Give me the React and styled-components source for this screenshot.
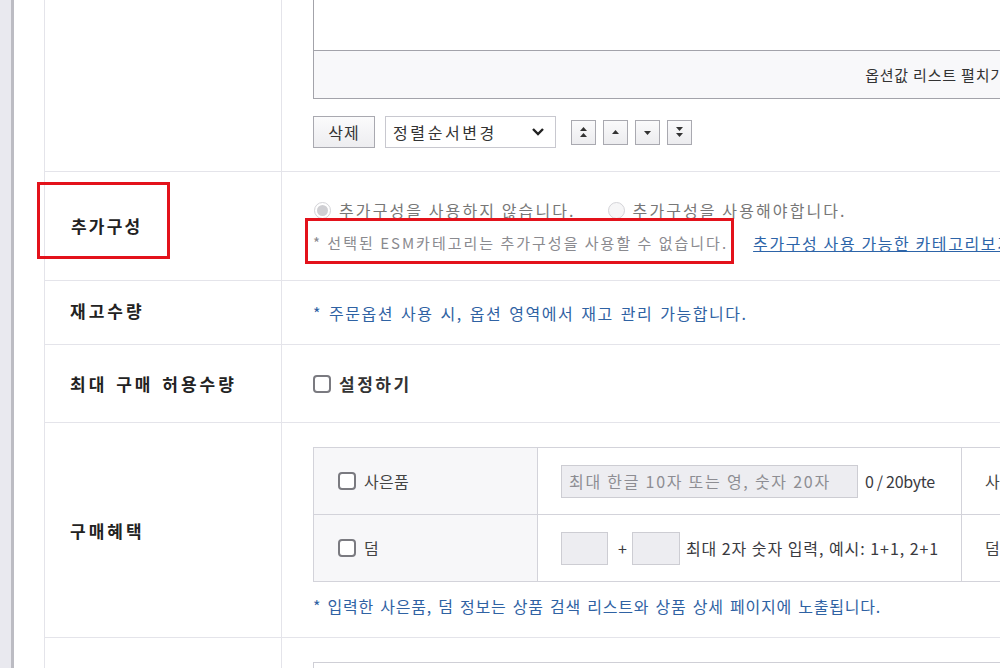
import React from 'react';
import styled, { createGlobalStyle } from 'styled-components';

const Global = createGlobalStyle`
  html, body { margin: 0; padding: 0; background: #fff; overflow: hidden; }
  body {
    font-family: "Noto Sans CJK KR", "Noto Sans", sans-serif;
    color: #333;
    font-size: 16px;
  }
  * { box-sizing: border-box; }
`;

const Shell = styled.div`
  display: flex;
  width: 1700px;
  height: 668px;
  overflow: hidden;
`;

const SideStrip = styled.div`
  width: 14px;
  flex-shrink: 0;
  background: #e9e9ef;
  border-right: 3px solid #bcbcc3;
`;

const Main = styled.div`
  flex: 1;
  padding-left: 30px;
`;

const Table = styled.div`
  border-left: 1px solid #e4e4ea;
  margin-top: -20px;
`;

const Row = styled.div`
  display: grid;
  grid-template-columns: 236px 1fr;
  border-bottom: 1px solid #e4e4ea;
`;

const LabelCell = styled.div`
  display: flex;
  align-items: center;
  padding: 0 0 ${(p) => p.$lift || '0'} 25px;
  font-weight: 700;
  color: #222;
  font-size: 17px;
  letter-spacing: 3px;
  word-spacing: 2px;
`;

const Mark = styled.div`
  display: flex;
  align-items: center;
  width: 133px;
  height: 77px;
  margin: 0 0 12px -33px;
  padding: 10px 0 0 31px;
  border: 3px solid #e3121b;
  letter-spacing: 2.2px;
`;

const ContentCell = styled.div`
  border-left: 1px solid #e4e4ea;
  padding: ${(p) => p.$pad || '0 0 0 31px'};
  display: flex;
  flex-direction: column;
  justify-content: ${(p) => (p.$center ? 'center' : 'flex-start')};
  min-height: ${(p) => p.$h || 'auto'};
`;

/* option list box */
const OptionBox = styled.div`
  width: 1264px;
  border: 1px solid #a3a3aa;
`;
const OptionList = styled.div`
  height: 51px;
  background: #fff;
`;
const OptionFooter = styled.div`
  height: 48px;
  border-top: 1px solid #a3a3aa;
  background: #f8f8fa;
  display: flex;
  align-items: center;
  justify-content: center;
  font-size: 15px;
  color: #333;
  letter-spacing: 0.8px;
`;

const Controls = styled.div`
  display: flex;
  align-items: center;
  margin-top: 17px;
  height: 32px;
`;

const Button = styled.div`
  height: 32px;
  width: 62px;
  display: flex;
  align-items: center;
  justify-content: center;
  border: 1px solid #a9a9b0;
  background: linear-gradient(#fbfbfc, #ededf0);
  font-size: 16px;
  color: #333;
  letter-spacing: 1px;
`;

const Select = styled.div`
  margin-left: 10px;
  width: 171px;
  height: 32px;
  border: 1px solid #c8c8cf;
  background: #fff;
  display: flex;
  align-items: center;
  justify-content: space-between;
  padding: 0 10px 0 7px;
  font-size: 16px;
  letter-spacing: 2.6px;
  color: #333;
`;

const ArrowGroup = styled.div`
  display: flex;
  gap: 7px;
  margin-left: 15px;
`;

const ArrowBtn = styled.div`
  width: 25px;
  height: 25px;
  border: 1px solid #a9a9b0;
  background: linear-gradient(#fafafb, #ececef);
  display: flex;
  align-items: center;
  justify-content: center;
`;

const RadioRow = styled.div`
  display: flex;
  align-items: center;
  height: 24px;
`;

const RadioItem = styled.label`
  display: flex;
  align-items: center;
  margin-right: ${(p) => p.$mr || '0'};
  color: #777;
  font-size: 16px;
  letter-spacing: 2.1px;
`;

const RadioDot = styled.span`
  width: 17px;
  height: 17px;
  border-radius: 50%;
  border: 1px solid #d4d4d8;
  background: ${(p) => (p.$checked ? '#fff' : '#f6f6f7')};
  margin: 0 8px 0 1px;
  display: flex;
  align-items: center;
  justify-content: center;
  &::after {
    content: '';
    display: ${(p) => (p.$checked ? 'block' : 'none')};
    width: 11px;
    height: 11px;
    border-radius: 50%;
    background: #cfcfd3;
  }
`;

const NoteLine = styled.div`
  display: flex;
  align-items: center;
  margin-top: 9px;
  height: 24px;
`;

const MarkedNote = styled.span`
  display: inline-block;
  border: 3px solid #e3121b;
  padding: 10px 3px 6px 5px;
  margin: -13px 0 -9px -8px;
  line-height: 24px;
  font-size: 15px;
  color: #8a8a8f;
  letter-spacing: 2px;
  white-space: nowrap;
`;

const Link = styled.a`
  margin-left: 19px;
  color: #2d64a8;
  text-decoration: underline;
  font-size: 16px;
  letter-spacing: 1.6px;
  white-space: nowrap;
`;

const BlueNote = styled.div`
  color: #2f62a3;
  font-size: 16px;
  letter-spacing: ${(p) => p.$ls || '1.5px'};
  word-spacing: 2px;
  line-height: 24px;
  margin-top: ${(p) => p.$mt || '0'};
  white-space: nowrap;
`;

const CheckLabel = styled.label`
  display: flex;
  align-items: center;
  font-size: ${(p) => (p.$bold ? '17px' : '16px')};
  color: ${(p) => (p.$bold ? '#333' : '#444')};
  font-weight: ${(p) => (p.$bold ? 700 : 400)};
  letter-spacing: ${(p) => (p.$bold ? '2.5px' : '0.3px')};
`;

const Box = styled.span`
  width: 18px;
  height: 18px;
  border: 2px solid #7a7a80;
  border-radius: 4px;
  background: #fff;
  margin-right: 8px;
  flex-shrink: 0;
`;

const Benefit = styled.div`
  display: grid;
  grid-template-columns: 224px 424px 700px;
  grid-auto-rows: 67px;
  border-top: 1px solid #d3d3da;
  border-left: 1px solid #d3d3da;
  width: max-content;
`;

const BCell = styled.div`
  display: flex;
  align-items: center;
  border-right: 1px solid #d3d3da;
  border-bottom: 1px solid #d3d3da;
  background: ${(p) => (p.$head ? '#f7f7f9' : '#fff')};
  padding-left: ${(p) => p.$pl || '23px'};
  font-size: 16px;
  color: #444;
  white-space: nowrap;
`;

const GrayInput = styled.div`
  width: ${(p) => p.$w};
  height: 33px;
  background: #ededf1;
  border: 1px solid #cdcdd3;
  display: flex;
  align-items: center;
  padding-left: 7px;
  font-size: 16px;
  color: #8d8d93;
  letter-spacing: 1.75px;
  white-space: nowrap;
  overflow: hidden;
`;

const SmallText = styled.span`
  margin-left: ${(p) => p.$ml || '0'};
  margin-right: ${(p) => p.$mr || '0'};
  font-size: 16px;
  color: #3a3a3f;
  letter-spacing: ${(p) => p.$ls || '0'};
`;

const NextBox = styled.div`
  width: 1264px;
  height: 80px;
  border: 1px solid #cfcfd6;
`;

const Tri = ({ d }) => (
  <svg width="11" height="13" viewBox="0 0 11 13">
    <path d={d} fill="#333" />
  </svg>
);

const Chevron = () => (
  <svg width="14" height="10" viewBox="0 0 14 10">
    <path d="M2 2 L7 7 L12 2" fill="none" stroke="#222" strokeWidth="2.4" />
  </svg>
);

export default function App() {
  return (
    <>
      <Global />
      <Shell>
        <SideStrip />
        <Main>
          <Table>
            <Row>
              <LabelCell />
              <ContentCell $pad="18px 0 23px 31px">
                <OptionBox>
                  <OptionList />
                  <OptionFooter>옵션값 리스트 펼치기 ▼</OptionFooter>
                </OptionBox>
                <Controls>
                  <Button>삭제</Button>
                  <Select>
                    <span>정렬순서변경</span>
                    <Chevron />
                  </Select>
                  <ArrowGroup>
                    <ArrowBtn>
                      <Tri d="M5.5 1 L9 5 L2 5 Z M5.5 7 L9 11 L2 11 Z" />
                    </ArrowBtn>
                    <ArrowBtn>
                      <Tri d="M5.5 4 L9 8 L2 8 Z" />
                    </ArrowBtn>
                    <ArrowBtn>
                      <Tri d="M2 5 L9 5 L5.5 9 Z" />
                    </ArrowBtn>
                    <ArrowBtn>
                      <Tri d="M2 1 L9 1 L5.5 5 Z M2 7 L9 7 L5.5 11 Z" />
                    </ArrowBtn>
                  </ArrowGroup>
                </Controls>
              </ContentCell>
            </Row>

            <Row>
              <LabelCell>
                <Mark>추가구성</Mark>
              </LabelCell>
              <ContentCell $pad="26px 0 24px 31px" $h="108px">
                <RadioRow>
                  <RadioItem $mr="31px">
                    <RadioDot $checked />
                    추가구성을 사용하지 않습니다.
                  </RadioItem>
                  <RadioItem>
                    <RadioDot />
                    추가구성을 사용해야합니다.
                  </RadioItem>
                </RadioRow>
                <NoteLine>
                  <MarkedNote>* 선택된 ESM카테고리는 추가구성을 사용할 수 없습니다.</MarkedNote>
                  <Link>추가구성 사용 가능한 카테고리보기</Link>
                </NoteLine>
              </ContentCell>
            </Row>

            <Row>
              <LabelCell $lift="4px">재고수량</LabelCell>
              <ContentCell $center $h="63px">
                <BlueNote>* 주문옵션 사용 시, 옵션 영역에서 재고 관리 가능합니다.</BlueNote>
              </ContentCell>
            </Row>

            <Row>
              <LabelCell>최대 구매 허용수량</LabelCell>
              <ContentCell $center $h="77px">
                <CheckLabel $bold>
                  <Box />
                  설정하기
                </CheckLabel>
              </ContentCell>
            </Row>

            <Row>
              <LabelCell>구매혜택</LabelCell>
              <ContentCell $pad="24px 0 19px 31px">
                <Benefit>
                  <BCell $head $pl="24px">
                    <CheckLabel>
                      <Box />
                      사은품
                    </CheckLabel>
                  </BCell>
                  <BCell>
                    <GrayInput $w="297px">최대 한글 10자 또는 영, 숫자 20자</GrayInput>
                    <SmallText $ml="7px" $ls="-0.3px">0 / 20byte</SmallText>
                  </BCell>
                  <BCell>사은품 노출 예시</BCell>
                  <BCell $head $pl="24px">
                    <CheckLabel>
                      <Box />
                      덤
                    </CheckLabel>
                  </BCell>
                  <BCell>
                    <GrayInput $w="47px" />
                    <SmallText $ml="10px" $mr="5px">+</SmallText>
                    <GrayInput $w="48px" />
                    <SmallText $ml="6px" $ls="0.95px">최대 2자 숫자 입력, 예시: 1+1, 2+1</SmallText>
                  </BCell>
                  <BCell>덤 노출 예시</BCell>
                </Benefit>
                <BlueNote $mt="12px" $ls="0.75px">
                  * 입력한 사은품, 덤 정보는 상품 검색 리스트와 상품 상세 페이지에 노출됩니다.
                </BlueNote>
              </ContentCell>
            </Row>

            <Row>
              <LabelCell />
              <ContentCell $pad="24px 0 0 31px">
                <NextBox />
              </ContentCell>
            </Row>
          </Table>
        </Main>
      </Shell>
    </>
  );
}
